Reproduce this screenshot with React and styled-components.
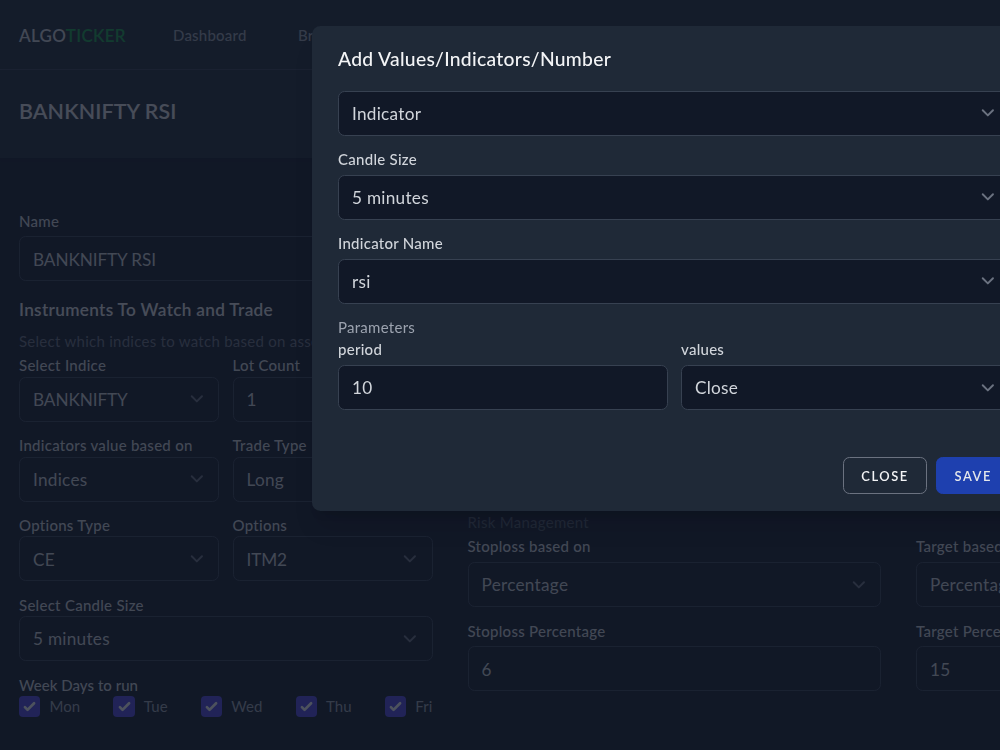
import styled, { createGlobalStyle, ThemeProvider } from 'styled-components'

const theme = {
  gray200: '#e5e7eb',
  gray300: '#d1d5db',
  gray400: '#9ca3af',
  gray500: '#6b7280',
  gray600: '#4b5563',
  gray700: '#374151',
  gray800: '#1f2937',
  gray900: '#111827',
  green: '#16a34a',
  indigo: '#4f46e5',
  blue: '#1e40af',
}

const App = () => {
  return (
    <ThemeProvider theme={theme}>
      <GlobalStyle />
      <Page>
        <Nav>
          <Logo>ALGO<span>TICKER</span></Logo>
          <NavLink>Dashboard</NavLink>
          <NavLink>Brokers</NavLink>
        </Nav>
        <Header>
          <PageTitle>BANKNIFTY RSI</PageTitle>
        </Header>
        <Main>
          <LeftColumn>
            <Field label='Name' value='BANKNIFTY RSI' tight caps />
            <SectionTitle>Instruments To Watch and Trade</SectionTitle>
            <SectionText>Select which indices to watch based on assets</SectionText>
            <Fields>
              <Field label='Select Indice' value='BANKNIFTY' select caps />
              <Field label='Lot Count' value='1' />
              <Field label='Indicators value based on' value='Indices' select />
              <Field label='Trade Type' value='Long' select />
              <Field label='Options Type' value='CE' select />
              <Field label='Options' value='ITM2' select caps />
            </Fields>
            <Field label='Select Candle Size' value='5 minutes' select />
            <DaysLabel>Week Days to run</DaysLabel>
            <Days>
              {['Mon', 'Tue', 'Wed', 'Thu', 'Fri'].map((day) => (
                <Day key={day}>
                  <CheckBox><CheckIcon /></CheckBox>
                  {day}
                </Day>
              ))}
            </Days>
          </LeftColumn>
          <RiskSection>
            <RiskTitle>Risk Management</RiskTitle>
            <RiskFields>
              <Field label='Stoploss based on' value='Percentage' select spaced />
              <Field label='Target based on' value='Percentage' select spaced />
              <Field label='Stoploss Percentage' value='6' spaced />
              <Field label='Target Percentage' value='15' spaced />
            </RiskFields>
          </RiskSection>
        </Main>
      </Page>
      <Overlay />
      <IndicatorModal />
    </ThemeProvider>
  )
}

export default App

/* ---------------- */

const Field = ({ label, value, select, spaced, tight, caps }) => {
  return (
    <FieldGroup $tight={tight}>
      {label && <Label $spaced={spaced}>{label}</Label>}
      <Control>
        <Value $caps={caps}>{value}</Value>
        {select && <ChevronIcon />}
      </Control>
    </FieldGroup>
  )
}

const ChevronIcon = () => (
  <Chevron viewBox='0 0 20 20' fill='none'>
    <path d='M6 8l4 4 4-4' strokeLinecap='round' strokeLinejoin='round' strokeWidth='1.5' />
  </Chevron>
)

const CheckIcon = () => (
  <svg viewBox='0 0 16 16' fill='#fff' width='21' height='21'>
    <path d='M12.207 4.793a1 1 0 010 1.414l-5 5a1 1 0 01-1.414 0l-2-2a1 1 0 011.414-1.414L6.5 9.086l4.293-4.293a1 1 0 011.414 0z' />
  </svg>
)

const IndicatorModal = () => {
  return (
    <Modal>
      <ModalTitle>Add Values/Indicators/Number</ModalTitle>
      <Field value='Indicator' select />
      <Field label='Candle Size' value='5 minutes' select spaced />
      <Field label='Indicator Name' value='rsi' select spaced />
      <Parameters>Parameters</Parameters>
      <Fields>
        <Field label='period' value='10' spaced />
        <Field label='values' value='Close' select spaced />
      </Fields>
      <Actions>
        <Button>Close</Button>
        <Button $primary>Save</Button>
      </Actions>
    </Modal>
  )
}

/* ---------------- */

const GlobalStyle = createGlobalStyle`
  * {
    box-sizing: border-box;
    margin: 0;
  }
  body {
    background-color: #111827;
    font-family: Lato, 'Open Sans', sans-serif;
    font-size: 15px;
    line-height: 21.4px;
    letter-spacing: 0.27px;
    overflow: hidden;
  }
`

const Page = styled.div`
  width: 100vw;
  height: 100vh;
  overflow: hidden;
  background-color: ${({ theme }) => theme.gray900};
`

const Nav = styled.nav`
  height: 70px;
  padding-left: 19px;
  display: flex;
  align-items: center;
  background-color: ${({ theme }) => theme.gray800};
  border-bottom: 1px solid ${({ theme }) => theme.gray700};
`

const Logo = styled.div`
  width: 154px;
  padding-top: 2px;
  font-size: 17px;
  font-weight: 600;
  letter-spacing: 0.3px;
  color: ${({ theme }) => theme.gray300};

  span {
    color: ${({ theme }) => theme.green};
  }
`

const NavLink = styled.a`
  width: 125px;
  padding-top: 2px;
  font-weight: 500;
  letter-spacing: 0.2px;
  color: ${({ theme }) => theme.gray400};
`

const Header = styled.header`
  height: 88px;
  padding: 0 0 5px 19px;
  display: flex;
  align-items: center;
  background-color: ${({ theme }) => theme.gray800};
  box-shadow: 0 1px 3px rgba(0, 0, 0, 0.1);
`

const PageTitle = styled.h2`
  font-size: 21.4px;
  font-weight: 600;
  letter-spacing: 0.1px;
  color: ${({ theme }) => theme.gray200};
`

const Main = styled.main`
  padding: 53px 0 0 19px;
  display: flex;
  gap: 35px;
`

const LeftColumn = styled.section`
  flex: 0 0 413.5px;
`

const FieldGroup = styled.div`
  min-width: 0;
  margin-bottom: ${({ $tight }) => ($tight ? '17px' : '13.4px')};
  ${({ $tight }) => $tight && 'label { margin-bottom: 4px; }'}
`

const Label = styled.label`
  display: block;
  margin-bottom: ${({ $spaced }) => ($spaced ? '4.3px' : '0')};
  font-weight: 500;
  white-space: nowrap;
  color: ${({ theme }) => theme.gray300};
`

const Control = styled.div`
  height: 45px;
  padding: 0 8.5px 0 13px;
  display: flex;
  align-items: center;
  justify-content: space-between;
  background-color: ${({ theme }) => theme.gray900};
  border: 1px solid ${({ theme }) => theme.gray700};
  border-radius: 6.5px;
`

const Value = styled.span`
  padding-top: 1px;
  font-size: 17.2px;
  letter-spacing: ${({ $caps }) => ($caps ? '-0.1px' : '0.27px')};
  color: ${({ theme }) => theme.gray300};
`

const Chevron = styled.svg`
  width: 25.7px;
  height: 25.7px;
  stroke: ${({ theme }) => theme.gray500};
`

const SectionTitle = styled.h3`
  font-size: 17.2px;
  line-height: 24px;
  font-weight: 600;
  letter-spacing: 0.32px;
  color: ${({ theme }) => theme.gray200};
`

const SectionText = styled.p`
  margin: 9px 0 2.5px;
  white-space: nowrap;
  color: ${({ theme }) => theme.gray500};
`

const Fields = styled.div`
  display: grid;
  grid-template-columns: repeat(2, minmax(0, 1fr));
  column-gap: 13.5px;
`

const DaysLabel = styled.p`
  font-weight: 500;
  letter-spacing: 0.03px;
  color: ${({ theme }) => theme.gray300};
`

const Days = styled.div`
  display: flex;
  justify-content: space-between;
`

const Day = styled.label`
  display: flex;
  align-items: center;
  gap: 9px;
  letter-spacing: 0.1px;
  color: ${({ theme }) => theme.gray400};
`

const CheckBox = styled.span`
  width: 21.4px;
  height: 21.4px;
  display: flex;
  align-items: center;
  justify-content: center;
  background-color: ${({ theme }) => theme.indigo};
  border-radius: 4px;
`

const RiskSection = styled.section`
  flex: 0 0 862px;
  padding-top: 301px;
`

const RiskTitle = styled.p`
  margin-bottom: 3px;
  color: ${({ theme }) => theme.gray600};
`

const RiskFields = styled(Fields)`
  column-gap: 35px;
`

const Overlay = styled.div`
  position: fixed;
  inset: 0;
  background-color: ${({ theme }) => theme.gray900};
  opacity: 0.75;
`

const Modal = styled.div`
  position: fixed;
  top: 26px;
  left: 312px;
  width: 724.5px;
  height: 485px;
  padding: 19.5px 26px 17px;
  background-color: ${({ theme }) => theme.gray800};
  border-radius: 8.5px;
  box-shadow: 0 20px 25px -5px rgba(0, 0, 0, 0.1), 0 8px 10px -6px rgba(0, 0, 0, 0.1);
`

const ModalTitle = styled.h2`
  margin-bottom: 19px;
  font-size: 19.3px;
  line-height: 26px;
  font-weight: 500;
  letter-spacing: 0.3px;
  color: #f3f4f6;
`

const Parameters = styled.p`
  margin-bottom: 0.7px;
  color: ${({ theme }) => theme.gray400};
`

const Actions = styled.div`
  margin-top: 33.8px;
  display: flex;
  justify-content: flex-end;
  gap: 9px;
`

const Button = styled.button`
  height: 36.5px;
  width: ${({ $primary }) => ($primary ? '74.5px' : '84px')};
  padding: 1px 0 0;
  font-family: inherit;
  font-size: 12.9px;
  font-weight: 600;
  letter-spacing: 1.55px;
  text-transform: uppercase;
  color: ${({ $primary }) => ($primary ? '#e5e7eb' : '#f3f4f6')};
  background-color: ${({ $primary, theme }) => ($primary ? theme.blue : 'transparent')};
  border: 1px solid ${({ $primary, theme }) => ($primary ? theme.blue : theme.gray500)};
  border-radius: 6.5px;
`
